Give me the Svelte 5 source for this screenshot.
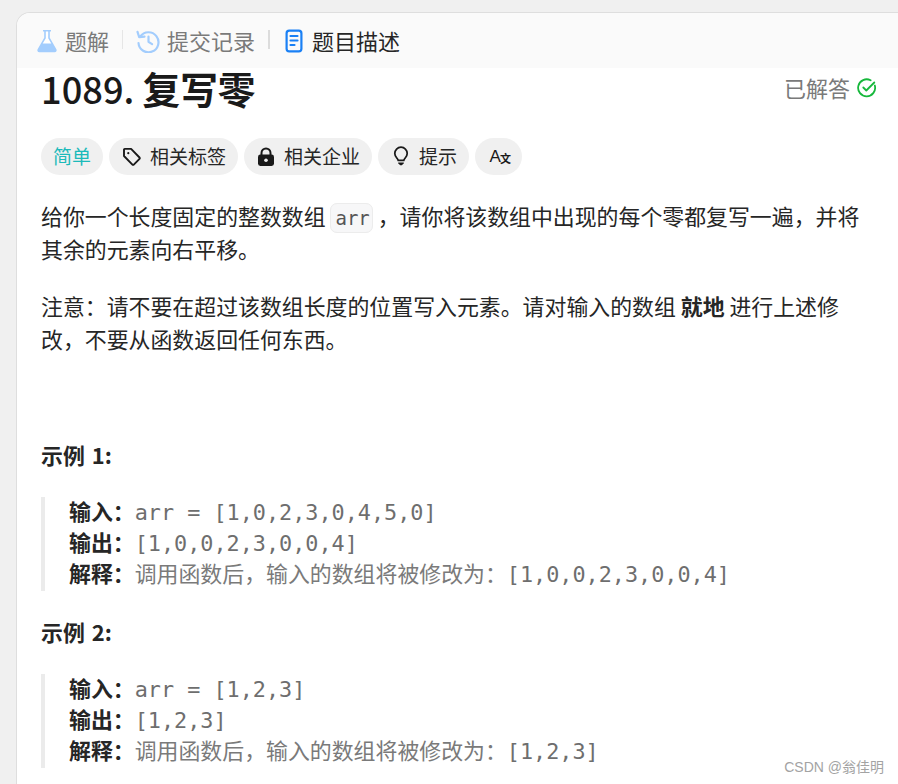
<script>
  const tags = [
    { label: '相关标签', icon: 'tag' },
    { label: '相关企业', icon: 'lock' },
    { label: '提示', icon: 'bulb' }
  ];
  const examples = [
    { title: '示例 1:', input: 'arr = [1,0,2,3,0,4,5,0]', output: '[1,0,0,2,3,0,0,4]', result: '[1,0,0,2,3,0,0,4]' },
    { title: '示例 2:', input: 'arr = [1,2,3]', output: '[1,2,3]', result: '[1,2,3]' }
  ];
</script>

<div class="page">
  <div class="card">
    <div class="tabs">
      <span class="tab">
        <svg width="22" height="24" viewBox="0 0 22 24"><path d="M7 1h8v1.600h-1.200v6.200l6.600 11.400c.8 1.500-.1 3-1.800 3H3.400c-1.700 0-2.600-1.500-1.800-3L8.200 8.800V2.600H7z" fill="#a3cdfd"/><path d="M9.800 2.600v6.600L6.700 14.500h8.600L12.200 9.200V2.600z" fill="#fff"/></svg>
        题解
      </span>
      <i class="sep"></i>
      <span class="tab">
        <svg width="24" height="24" viewBox="0 0 24 24" fill="none" stroke="#a3cdfd" stroke-width="2.200" stroke-linecap="round" stroke-linejoin="round"><path d="M4.300 7.500A10 10 0 1 1 2.500 14"/><path d="M1.500 2.800l1.700 5.400 5.300-.6"/><path d="M12.500 7.500v5.300l3.600 2.400"/></svg>
        提交记录
      </span>
      <i class="sep dark"></i>
      <span class="tab active">
        <svg width="18" height="24" viewBox="0 0 18 24" fill="none" stroke="#1a80f5" stroke-width="2.200" stroke-linecap="round"><rect x="1.600" y="1.600" width="14.800" height="20.800" rx="2.600"/><path d="M5.500 7h7M5.500 11.500h7M5.500 16h4"/></svg>
        题目描述
      </span>
    </div>

    <div class="body">
      <div class="head">
        <h1>1089. <b>复写零</b></h1>
        <span class="solved">
          已解答
          <svg width="20" height="20" viewBox="0 0 20 20" fill="none" stroke="#17b83c" stroke-width="1.800" stroke-linecap="round" stroke-linejoin="round"><path d="M17.800 7.500A8.500 8.500 0 1 1 13.600 2.300"/><path d="M6.300 9.500l3 3 8-8"/></svg>
        </span>
      </div>

      <div class="chips">
        <span class="chip easy">简单</span>
        {#each tags as t}
          <span class="chip">
            {#if t.icon === 'tag'}
              <svg width="20" height="20" viewBox="0 0 20 20" fill="none" stroke="#1a1a1a" stroke-width="1.900" stroke-linejoin="round"><path d="M2 2.600c0-.4.300-.7.700-.7h6.400l8.400 8.600c.4.400.4 1 0 1.400l-5.700 5.700c-.4.400-1 .4-1.400 0L2 9z"/><circle cx="6.300" cy="6.200" r="1.100" fill="#1a1a1a" stroke="none"/></svg>
            {:else if t.icon === 'lock'}
              <svg class="lock" width="18" height="20" viewBox="0 0 18 20"><path d="M4.500 8V6a4.500 4.500 0 0 1 9 0v2" fill="none" stroke="#1a1a1a" stroke-width="2"/><rect x="1" y="7.500" width="16" height="11.500" rx="2.400" fill="#1a1a1a"/><circle cx="9" cy="13.200" r="1.800" fill="#f0f0f0"/></svg>
            {:else}
              <svg class="bulb" width="16" height="21" viewBox="0 0 18 24" fill="none" stroke="#1a1a1a" stroke-width="2" stroke-linejoin="round"><path d="M5.800 16.500c0-2-3.900-3.800-3.900-8a7.100 7.100 0 0 1 14.200 0c0 4.200-3.900 6-3.900 8z"/><path d="M5.800 18.800h6.400v.8c0 .5-.3.900-.8 1.100l-1.500 1.400H8.100l-1.500-1.400c-.5-.2-.8-.6-.8-1.100z" fill="#1a1a1a" stroke="none"/></svg>
            {/if}
            {t.label}
          </span>
        {/each}
        <span class="chip translate"><span class="big">A</span><span class="small">文</span></span>
      </div>

      <p>给你一个长度固定的整数数组 <code>arr</code> ，请你将该数组中出现的每个零都复写一遍，并将其余的元素向右平移。</p>
      <p>注意：请不要在超过该数组长度的位置写入元素。请对输入的数组 <strong>就地</strong> 进行上述修改，不要从函数返回任何东西。</p>

      <div class="gap"></div>

      {#each examples as ex}
        <h2>{ex.title}</h2>
        <div class="example">
          <div><strong>输入：</strong><span class="mono">{ex.input}</span></div>
          <div><strong>输出：</strong><span class="mono">{ex.output}</span></div>
          <div><strong>解释：</strong>调用函数后，输入的数组将被修改为：<span class="mono">{ex.result}</span></div>
        </div>
      {/each}
    </div>
  </div>
  <span class="mark">CSDN @翁佳明</span>
</div>

<style>
  :global(body) {
    background: #f0f0f0;
    overflow: hidden;
  }
  .page {
    position: relative;
    height: 784px;
    padding: 12px 0 0 16px;
    box-sizing: border-box;
    overflow: hidden;
    font-family: "Noto Sans CJK SC", sans-serif;
    color: #262626;
  }
  .card {
    height: 772px;
    background: #fff;
    border-top: 1px solid #dedede;
    border-left: 1px solid #dedede;
    border-top-left-radius: 14px;
    overflow: hidden;
  }
  .tabs {
    height: 53px;
    padding-bottom: 2px;
    background: #fafafa;
    display: flex;
    align-items: center;
    padding-left: 19px;
  }
  .tab {
    display: flex;
    align-items: center;
    gap: 7px;
    font-size: 22px;
    line-height: 32px;
    color: #7a7a7a;
  }
  .tab.active {
    color: #262626;
    gap: 9px;
  }
  .tab svg {
    margin-top: 2px;
  }
  .sep {
    width: 1px;
    height: 19px;
    background: #e6e6e6;
    margin: 0 13px;
  }
  .sep.dark {
    width: 2px;
    background: #dcdcdc;
    margin: 0 15px 0 13px;
  }
  .body {
    padding: 0 20px 0 24px;
  }
  .head {
    display: flex;
    justify-content: space-between;
    height: 43px;
  }
  h1 {
    margin: 0;
    font-size: 36.200px;
    line-height: 40px;
    font-weight: 500;
    color: #1a1a1a;
    white-space: nowrap;
  }
  h1 b {
    font-size: 37.700px;
    font-weight: 700;
  }
  .solved {
    display: flex;
    align-items: center;
    gap: 7px;
    height: 38px;
    font-size: 22px;
    color: #7a7a7a;
  }
  .solved svg {
    margin-top: 1px;
    margin-right: 1px;
  }
  .chips {
    display: flex;
    gap: 6px;
    margin-top: 27px;
  }
  .chip {
    height: 37px;
    box-sizing: border-box;
    padding: 0 12px 2px 13px;
    border-radius: 19px;
    background: #f0f0f0;
    display: flex;
    align-items: center;
    gap: 8px;
    font-size: 19px;
    color: #262626;
  }
  .chip svg {
    margin-top: 2px;
  }
  .chip .lock {
    margin-right: 1px;
  }
  .chip .bulb {
    margin-left: 2px;
    margin-right: 2px;
  }
  .chip.easy {
    color: #1cbaba;
    padding: 0 12px 2px;
  }
  .chip.translate {
    width: 47px;
    gap: 0;
    padding: 0 0 0 14.500px;
    color: #1a1a1a;
  }
  .big {
    font-family: "Liberation Sans", sans-serif;
    font-size: 17px;
  }
  .small {
    font-size: 11px;
    font-weight: 700;
    margin-top: 3px;
    margin-left: -1px;
  }
  p {
    margin: 0 0 24px;
    font-size: 21.900px;
    line-height: 33px;
    color: #262626;
    width: 828px;
  }
  .chips + p {
    margin-top: 24px;
  }
  code {
    font-family: "DejaVu Sans Mono", monospace;
    font-size: 19px;
    line-height: 1;
    color: #555;
    background: #f7f7f8;
    border: 1px solid #ececec;
    border-radius: 7px;
    padding: 3px 2px 3px 4px;
  }
  strong {
    font-weight: 700;
    color: #262626;
  }
  .gap {
    height: 59px;
  }
  h2 {
    margin: 0;
    font-size: 21.900px;
    line-height: 33px;
    font-weight: 700;
    word-spacing: 2px;
    color: #262626;
  }
  .example {
    display: flex;
    flex-direction: column;
    margin: 26px 0 24px;
    padding-left: 24px;
    border-left: 4px solid #ebebeb;
    font-size: 21.900px;
    line-height: 31px;
    color: #7a7a7a;
    white-space: nowrap;
    height: 94px;
  }
  .example > div {
    height: 31px;
  }
  .example > div:first-child {
    margin-top: -2px;
  }
  .mono {
    font-family: "DejaVu Sans Mono", monospace;
    font-size: 21.800px;
    line-height: 1;
    color: #6e6e6e;
  }
  .mark {
    position: absolute;
    right: 14px;
    bottom: 8px;
    font-family: "Liberation Sans", "Noto Sans CJK SC", sans-serif;
    font-size: 14px;
    color: #a3a3a3;
  }
</style>
